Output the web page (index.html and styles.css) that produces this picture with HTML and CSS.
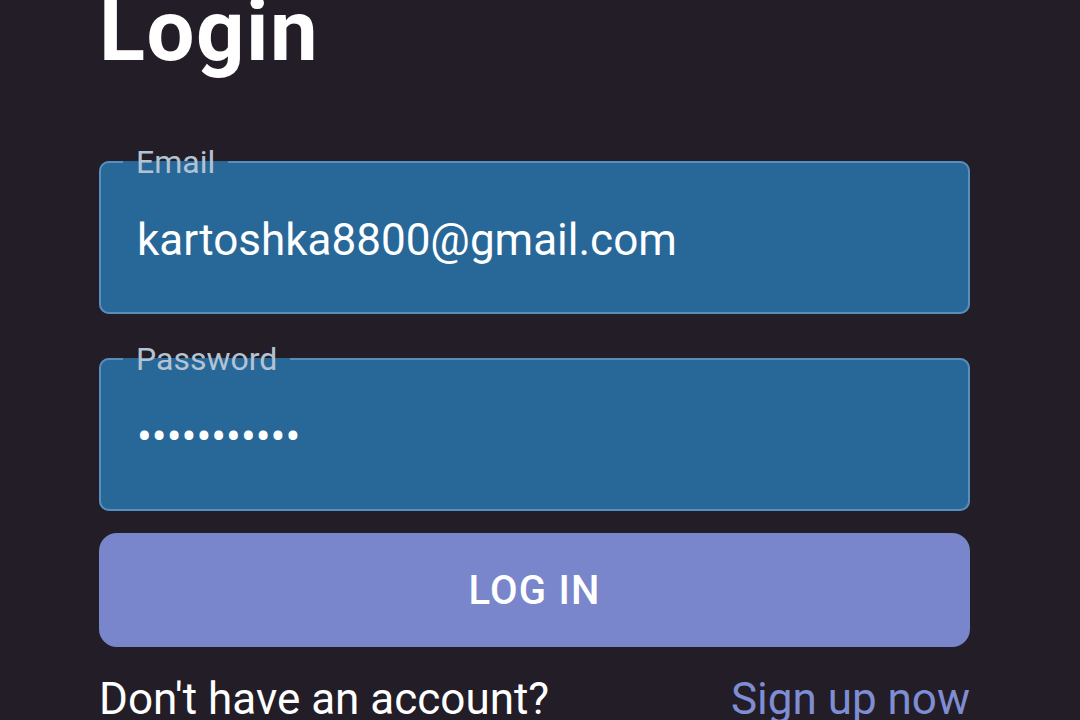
FILE: index.html
```html
<!DOCTYPE html>
<html lang="en">
<head>
<meta charset="utf-8">
<title>Login</title>
<link rel="stylesheet" href="styles.css">
</head>
<body>
<main class="page">
  <form class="login" onsubmit="return false">
    <h1 class="title">Login</h1>
    <fieldset class="field field-email">
      <legend class="field-label">Email</legend>
      <input class="field-input" type="email" value="kartoshka8800@gmail.com">
    </fieldset>
    <fieldset class="field field-password">
      <legend class="field-label">Password</legend>
      <input class="field-input" type="password" value="kartoshka88">
    </fieldset>
    <button class="submit" type="submit">Log in</button>
    <div class="footer">
      <span class="footer-text">Don't have an account?</span>
      <a class="footer-link" href="#">Sign up now</a>
    </div>
  </form>
</main>
</body>
</html>
```
FILE: styles.css
```css
html, body {
  margin: 0;
  padding: 0;
  height: 100%;
  overflow: hidden;
}
body {
  background: #221d26;
  font-family: Roboto, "Liberation Sans", Arial, sans-serif;
  color: #ffffff;
}
.page {
  padding-left: 99px;
  width: 871px;
}
.login {
  display: flex;
  flex-direction: column;
  margin-top: -19px;
}
.title {
  margin: 0;
  font-size: 85px;
  font-weight: 700;
  letter-spacing: 1.5px;
  line-height: normal;
  color: #ffffff;
}
.field {
  margin: 0;
  min-width: 0;
  border: 2px solid #5b8dba;
  border-radius: 10px;
  background: #286899;
  padding: 36px 36px 46px;
}
.field-email {
  margin-top: 65px;
}
.field-password {
  margin-top: 29px;
}
.field-label {
  margin-left: -14px;
  padding: 0 13px;
  font-size: 32px;
  line-height: 1;
  color: #b4c3d2;
}
.field-input {
  display: block;
  width: 100%;
  box-sizing: border-box;
  border: 0;
  padding: 0;
  margin: 0;
  background: transparent;
  font-family: Roboto, "Liberation Sans", Arial, sans-serif;
  font-size: 44px;
  line-height: normal;
  height: 52px;
  color: #ffffff;
  outline: none;
}
.submit {
  margin-top: 22px;
  height: 114px;
  border: 0;
  border-radius: 18px;
  background: #7986cb;
  color: #ffffff;
  font-family: Roboto, "Liberation Sans", Arial, sans-serif;
  font-size: 40px;
  font-weight: 500;
  letter-spacing: 1.2px;
  text-transform: uppercase;
  padding: 0;
}
.footer {
  margin-top: 26px;
  display: flex;
  justify-content: space-between;
  font-size: 44px;
  line-height: normal;
}
.footer-text {
  color: #ffffff;
}
.footer-link {
  color: #7f8dd3;
  text-decoration: none;
}
```
